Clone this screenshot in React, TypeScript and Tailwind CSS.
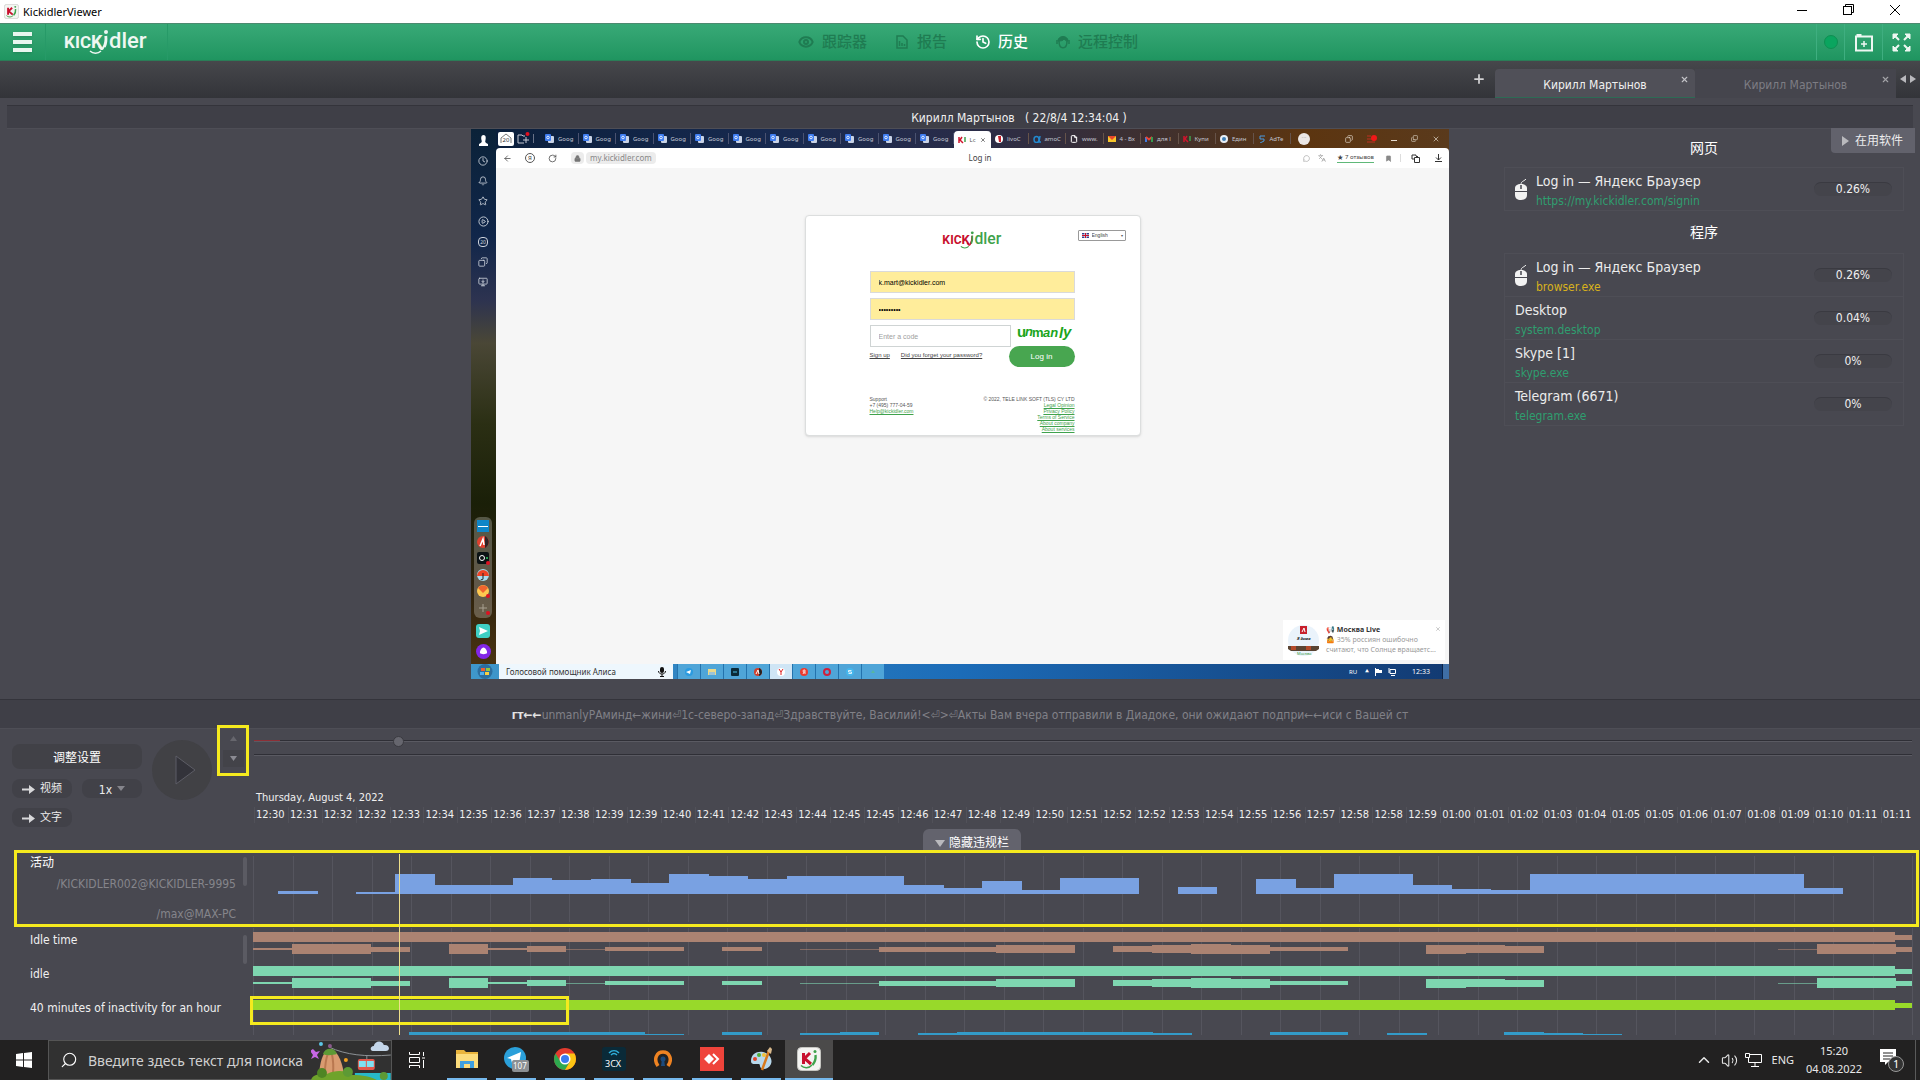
import type { ReactNode } from "react";
import {
  ArrowLeft,
  Bell,
  Bookmark,
  ChevronUp,
  Clock,
  Copy,
  Eye,
  File,
  History,
  Lock,
  MonitorDown,
  Plus,
  RotateCw,
  Search,
  Star,
  CirclePlay,
  Volume2,
  X,
  MessageCircle,
  Languages,
} from "lucide-react";

const uiFont = "font-['DejaVu_Sans_Condensed','Noto_Sans_CJK_SC',sans-serif]";
const winFont = "font-['Noto_Sans','Noto_Sans_CJK_SC',sans-serif]";

const times = [
  "12:30", "12:31", "12:32", "12:32", "12:33", "12:34", "12:35", "12:36", "12:37", "12:38",
  "12:39", "12:39", "12:40", "12:41", "12:42", "12:43", "12:44", "12:45", "12:45", "12:46",
  "12:47", "12:48", "12:49", "12:50", "12:51", "12:52", "12:52", "12:53", "12:54", "12:55",
  "12:56", "12:57", "12:58", "12:58", "12:59", "01:00", "01:01", "01:02", "01:03", "01:04",
  "01:05", "01:05", "01:06", "01:07", "01:08", "01:09", "01:10", "01:11", "01:11",
];

const activity = [
  3, 0, 2, 20, 9, 9, 16, 14, 15, 11, 20, 18, 15, 18, 18, 18, 9, 6, 13, 4, 16, 16, 0, 7, 0, 15, 6,
  20, 20, 9, 5, 4, 20, 20, 20, 20, 20, 20, 20, 6,
];

const idleLevels = [
  2, 10, 10, 5, 0, 10, 2, 6, 1, 4, 4, 0, 4, 0, 1, 1, 5, 5, 5, 8, 8, 0, 6, 8, 10, 9, 4, 4, 0, 0, 9,
  8, 7, 0, 0, 0, 0, 0, 0, 1, 10, 10,
];

const blueLevels = [
  0, 0, 0, 0, 3, 3, 3, 3, 3, 3, 1, 0, 3, 0, 2, 3, 0, 2, 3, 3, 3, 3, 3, 2, 0, 0, 3, 3, 0, 2, 0, 0, 3,
  2, 1,
];

const CHART_W = 1660;
const SLOT = 39.1;

function GridLines({ height }: { height: number }) {
  return (
    <>
      {Array.from({ length: 43 }, (_, i) => (
        <rect key={i} x={i * 39.5} y={0} width={1} height={height} fill="#55555e" />
      ))}
    </>
  );
}

function ActivityChart() {
  return (
    <svg className="block h-[66px] w-full" viewBox={`0 0 ${CHART_W} 66`} preserveAspectRatio="none" shapeRendering="crispEdges">
      <GridLines height={66} />
      {activity.map((h, i) => (
        <rect key={i} x={25 + i * 39.12} y={38 - h} width={h ? 39.6 : 0} height={h} fill="#79a1e2" />
      ))}
    </svg>
  );
}

function Lane({ color, levels }: { color: string; levels: number[] }) {
  return (
    <svg className="block h-[34px] w-full" viewBox={`0 0 ${CHART_W} 34`} preserveAspectRatio="none" shapeRendering="crispEdges">
      <GridLines height={34} />
      <rect x={0} y={4} width={1642} height={10} fill={color} />
      <rect x={1642} y={7} width={17} height={5} fill={color} />
      {levels.map((h, i) => (
        <rect key={i} x={i * SLOT} y={21 - Math.floor(h / 2)} width={h ? 39.6 : 0} height={h} fill={color} opacity={h === 1 ? 0.6 : 1} />
      ))}
      {levels.length > 0 && <rect x={1642} y={19} width={17} height={5} fill={color} />}
    </svg>
  );
}

function ClippedLane() {
  return (
    <svg className="block h-[5px] w-full" viewBox={`0 0 ${CHART_W} 5`} preserveAspectRatio="none" shapeRendering="crispEdges">
      <GridLines height={5} />
      {blueLevels.map((h, i) => (
        <rect key={i} x={i * SLOT} y={5 - h} width={h ? 39.6 : 0} height={h} fill="#339bc9" />
      ))}
    </svg>
  );
}

function Logo({ className, left, right }: { className: string; left: string; right: string }) {
  return (
    <svg className={className} viewBox="0 0 86 28" role="img" aria-label="Kickidler">
      <g fontFamily="Roboto, Noto Sans, sans-serif" fontWeight="700">
        <text x="0" y="20" fontSize="17" fill={left}>K</text>
        <text x="11" y="20" fontSize="17" fill={left}>I</text>
        <text x="16" y="20" fontSize="17" fill={left}>C</text>
        <text x="27" y="20" fontSize="18" fill={left}>K</text>
        <text x="45" y="20" fontSize="22" fontWeight="500" fill={right}>dler</text>
      </g>
      <path d="M35 18c1 3 3 4 4 2 2-3 3-7 2.500-12" stroke={left} strokeWidth="2" fill="none" />
      <path d="M42 8c.5 4 0 8-1.500 11" stroke={right} strokeWidth="2.400" fill="none" />
      <circle cx="42" cy="4" r="2" fill={right} />
      <path d="M26 23c3 3 8 3 11 0" stroke={right} strokeWidth="1.500" fill="none" />
    </svg>
  );
}

function KIcon({ className }: { className: string }) {
  return (
    <svg className={className} viewBox="0 0 24 24">
      <rect x="0.5" y="0.5" width="23" height="23" rx="4" fill="#f4f4f2" stroke="#c6c6c2" />
      <path d="M6.500 6v11M13 6l-5.500 5.500L14 17" stroke="#c8102e" strokeWidth="3" fill="none" />
      <path d="M18.500 8c.5 4-.5 7-3 10" stroke="#3fa24c" strokeWidth="2.400" fill="none" />
      <circle cx="18" cy="4.500" r="1.500" fill="#3fa24c" />
      <path d="M4 18.500c3 3 8 3 11-.5" stroke="#3fa24c" strokeWidth="1.500" fill="none" />
    </svg>
  );
}

function TitleBar() {
  return (
    <div className={`flex h-[23px] items-center bg-white pl-1 pr-[19px] text-black ${winFont}`}>
      <KIcon className="h-[15px] w-[15px]" />
      <span className="ml-1 text-[11px] leading-none">KickidlerViewer</span>
      <div className="ml-auto flex items-center gap-[34px] pb-[3px]">
        <button aria-label="Minimize" className="flex h-3 w-3 items-center">
          <span className="h-px w-[10px] bg-black" />
        </button>
        <button aria-label="Restore">
          <svg className="h-3 w-3" viewBox="0 0 12 12" fill="none" stroke="#000">
            <rect x="0.500" y="2.500" width="8" height="8" />
            <path d="M2.500 2.500v-2h8v8h-2" />
          </svg>
        </button>
        <button aria-label="Close">
          <svg className="h-3 w-3" viewBox="0 0 12 12" fill="none" stroke="#000">
            <path d="M1 1l10 10M11 1L1 11" />
          </svg>
        </button>
      </div>
    </div>
  );
}

function NavItem({ icon, label, active }: { icon: ReactNode; label: string; active?: boolean }) {
  return (
    <a href="#" className={active ? "flex items-center gap-[7px] text-white" : "flex items-center gap-[8px] text-[#1f7c52]"}>
      {icon}
      <span className="text-[15px] font-medium leading-none">{label}</span>
    </a>
  );
}

function Header() {
  return (
    <header className="grid h-[38px] grid-cols-[1fr_auto_1fr] items-center border-b border-t border-b-[#2a7d57] border-t-[#4c8a70] bg-gradient-to-b from-[#38a977] to-[#1f9560]">
      <div className="flex h-full items-center">
        <button aria-label="Menu" className="flex h-full w-[46px] flex-col items-center justify-center gap-[4px] border-r border-[#279a68]">
          <span className="h-[4px] w-[19px] bg-[#e8f6ef] shadow" />
          <span className="h-[4px] w-[19px] bg-[#e8f6ef] shadow" />
          <span className="h-[4px] w-[19px] bg-[#e8f6ef] shadow" />
        </button>
        <div className="flex h-full w-[122px] items-center justify-center border-r border-[#279a68]">
          <Logo className="h-[28px] w-[86px]" left="#eef7f2" right="#eef7f2" />
        </div>
      </div>
      <nav className="ml-[16px] flex items-center gap-[28px]">
        <NavItem icon={<Eye size={16} strokeWidth={3} />} label="跟踪器" />
        <NavItem
          icon={
            <svg className="h-[14px] w-[14px]" viewBox="0 0 14 14" fill="none" stroke="currentColor" strokeWidth="1.500">
              <path d="M2 1h6l4 4v8H2z" />
              <path d="M4.500 11V6M7 11V8M9.500 11V9" />
            </svg>
          }
          label="报告"
        />
        <NavItem icon={<History size={16} strokeWidth={2.5} />} label="历史" active />
        <NavItem
          icon={
            <svg className="h-[14px] w-[14px]" viewBox="0 0 14 14" fill="none" stroke="currentColor">
              <path d="M2 6C2 0 12 0 12 6c-2 0-3-1-4-2-1 2-4 2-6 2z" fill="currentColor" />
              <path d="M3 6c0 9 8 9 8 0" strokeWidth="1.500" />
              <path d="M1 5v4M13 5v4" strokeWidth="1.500" />
            </svg>
          }
          label="远程控制"
        />
      </nav>
      <div className="flex h-full items-stretch justify-end text-white">
        <div className="flex w-[28px] items-center justify-center border-l border-[#3fae80]">
          <span className="h-[14px] w-[14px] rounded-full border border-[#0e8f52] bg-[#0aa55f]" />
        </div>
        <button aria-label="Add view" className="flex w-[38px] items-center justify-center border-l border-[#3fae80]">
          <svg className="h-[19px] w-[18px]" viewBox="0 0 18 19" fill="none" stroke="#eef7f2" strokeWidth="2">
            <path d="M1.500 2h5M1 3.500h16v14H1z" />
            <path d="M9 8v6M6 11h6" strokeWidth="1.500" />
          </svg>
        </button>
        <button aria-label="Full screen" className="flex w-[38px] items-center justify-center border-l border-[#3fae80]">
          <svg className="h-[19px] w-[19px]" viewBox="0 0 19 19" fill="#eef7f2" stroke="#eef7f2" strokeWidth="2">
            <path d="M1 1h5L1 6zM18 1v5l-5-5zM1 18v-5l5 5zM18 18h-5l5-5z" strokeWidth="1" />
            <path d="M2 2l5 5M17 2l-5 5M2 17l5-5M17 17l-5-5" />
          </svg>
        </button>
      </div>
    </header>
  );
}

function TabStrip() {
  return (
    <div className="flex h-[37px] items-end justify-end bg-gradient-to-b from-[#46474b] to-[#333439] text-[12px]">
      <button aria-label="New tab" className="mb-[12px] mr-[9px] text-[#d2d2d4]">
        <Plus size={14} strokeWidth={3} />
      </button>
      <div className="relative flex h-[29px] w-[200px] items-center justify-center rounded-t border-b border-[#2d6b55] bg-[#505058] pt-[3px] text-[#f0f0f0]">
        Кирилл Мартынов
        <button aria-label="Close tab" className="absolute right-[6px] top-[6px] text-[#c4c4c8]">
          <X size={9} strokeWidth={3} />
        </button>
      </div>
      <div className="relative flex h-[29px] w-[201px] items-center justify-center bg-[#45454d] pt-[3px] text-[#7d7d84]">
        Кирилл Мартынов
        <button aria-label="Close tab" className="absolute right-[6px] top-[6px] text-[#a4a4a8]">
          <X size={9} strokeWidth={3} />
        </button>
      </div>
      <div className="flex w-[24px] justify-center pb-[15px]">
        <svg className="h-[8px] w-[16px]" viewBox="0 0 16 8" fill="#b9b9bd">
          <path d="M6 0v8L0 4zM10 0v8l6-4z" />
        </svg>
      </div>
    </div>
  );
}

function GoogleGlyph() {
  return (
    <svg className="h-[9px] w-[9px] shrink-0" viewBox="0 0 9 9">
      <rect x="3" y="2" width="6" height="7" rx="1" fill="#c9d3e6" />
      <rect x="0" y="0" width="6" height="7" rx="1" fill="#3f7df0" />
      <circle cx="3" cy="3.500" r="1.300" fill="none" stroke="#fff" strokeWidth="0.800" />
    </svg>
  );
}

const siteTabs: { label: string; icon: ReactNode }[] = [
  { label: "livoC", icon: <svg className="h-2 w-2 shrink-0" viewBox="0 0 8 8"><circle cx="4" cy="4" r="4" fill="#fff" /><path d="M3 1h3v6H4z" fill="#c8202c" /></svg> },
  { label: "amoC", icon: <svg className="h-2 w-2 shrink-0" viewBox="0 0 8 8" fill="none" stroke="#2389cf" strokeWidth="1.500"><ellipse cx="3.500" cy="4.500" rx="2.500" ry="3" /><path d="M7 1L6 7h2" /></svg> },
  { label: "www.", icon: <File size={8} color="#fff" strokeWidth={3} className="shrink-0" /> },
  { label: "4 - Вх", icon: <svg className="h-2 w-2 shrink-0" viewBox="0 0 8 8"><path d="M0 1h8v6H0z" fill="#f7c52b" /><path d="M0 1h8L4 5z" fill="#e8472b" /></svg> },
  { label: "для l", icon: <svg className="h-2 w-2 shrink-0" viewBox="0 0 8 8" fill="none" strokeWidth="1.800"><path d="M1 7V2" stroke="#4285f4" /><path d="M1 2l3 2.500L7 2" stroke="#ea4335" /><path d="M7 7V2" stroke="#34a853" /></svg> },
  { label: "Купи", icon: <svg className="h-2 w-2 shrink-0" viewBox="0 0 8 8" fill="none" strokeWidth="1.500"><path d="M1 1v6M4 1L2 4l3 3" stroke="#d0142c" /><path d="M7 1v5" stroke="#3fa24c" /></svg> },
  { label: "Един", icon: <svg className="h-2 w-2 shrink-0" viewBox="0 0 8 8"><circle cx="4" cy="4" r="4" fill="#e8eef4" /><circle cx="4" cy="4" r="2" fill="#3d7eb5" /></svg> },
  { label: "AdTe", icon: <svg className="h-2 w-2 shrink-0" viewBox="0 0 8 8" fill="none" stroke="#4a9ae0"><path d="M7 1H2v3h4v2L2 8" /></svg> },
];

function RemoteTabs() {
  return (
    <div className="flex h-[19px] items-stretch text-[6px] text-[#c4c8d4]">
      <div className="flex w-[45px] shrink-0 items-center gap-[3px] pl-[2px]">
        <svg className="h-[14px] w-4" viewBox="0 0 16 14">
          <rect width="16" height="14" rx="2" fill="#fff" />
          <path d="M3 11V6l5-4 5 4v5" fill="none" stroke="#555" strokeWidth="0.800" />
          <text x="4.500" y="9.500" fontSize="6" fill="#333">20</text>
        </svg>
        <svg className="h-[13px] w-[13px]" viewBox="0 0 13 13" fill="none" stroke="#c4c8d4">
          <path d="M7 11H1V3h4l1 1h2M9 5v6M6 8h6" />
          <circle cx="10.500" cy="2" r="2" fill="#e01020" stroke="none" />
        </svg>
        <span className="h-[9px] w-px bg-[#6a7288]" />
      </div>
      {Array.from({ length: 11 }, (_, i) => (
        <div key={i} className="my-[4px] flex min-w-0 flex-1 items-center gap-[4px] border-r border-[#4a5270] pl-[4px]">
          <GoogleGlyph />
          <span className="leading-none">Goog</span>
        </div>
      ))}
      <div className="mt-[2px] flex min-w-0 flex-1 items-center gap-1 rounded-t border-r border-white bg-white pl-[4px] text-[#555]">
        <svg className="h-2 w-2 shrink-0" viewBox="0 0 8 8" fill="none" strokeWidth="1.500"><path d="M1 1v6M4 1L2 4l3 3" stroke="#d0142c" /><path d="M7 1v5" stroke="#3fa24c" /></svg>
        <span className="leading-none">Lc</span>
        <X size={6} strokeWidth={3} className="shrink-0" />
      </div>
      {siteTabs.map((t) => (
        <div key={t.label} className="my-[4px] flex min-w-0 flex-1 items-center gap-[4px] whitespace-nowrap border-r border-[#66534a] pl-[4px]">
          {t.icon}
          <span className="leading-none">{t.label}</span>
        </div>
      ))}
      <div className="flex w-[158px] shrink-0 items-center pl-[7px] pr-[9px] text-[#e6dcd0]">
        <span className="h-3 w-3 rounded-full bg-[#ece8e6] text-center text-[6px] leading-[9px] text-[#888]">···</span>
        <div className="ml-auto flex items-center gap-[14px]">
          <Copy size={8} className="-scale-x-100" />
          <svg className="h-[8px] w-[10px]" viewBox="0 0 10 8"><path d="M0 1h4M0 4h5M0 7h8" stroke="#c03020" /><circle cx="7" cy="3" r="3" fill="#f01818" /></svg>
          <span className="mt-1 h-px w-[6px] bg-[#e6dcd0]" />
          <Copy size={7} className="-scale-y-100" />
          <X size={8} />
        </div>
      </div>
    </div>
  );
}

function RemoteToolbar() {
  return (
    <div className="flex h-5 items-center rounded-t bg-white px-[7px] text-[#444]">
      <div className="flex flex-1 items-center">
        <ArrowLeft size={9} />
        <span className="ml-[13px] flex h-[10px] w-[10px] items-center justify-center rounded-full border border-[#555] text-[6px] leading-none">Я</span>
        <RotateCw size={9} className="ml-[13px]" />
        <span className="ml-[14px] flex h-3 w-[13px] items-center justify-center rounded-sm bg-[#ececec]">
          <Lock size={7} fill="#777" color="#777" />
        </span>
        <span className="ml-[2px] rounded-sm bg-[#ececec] px-1 text-[8px] leading-[12px] text-[#888]">my.kickidler.com</span>
      </div>
      <span className="ml-[15px] text-[8px] leading-none">Log in</span>
      <div className="flex flex-1 items-center justify-end">
        <MessageCircle size={7} color="#999" />
        <Languages size={8} color="#999" className="ml-2" />
        <span className="ml-[11px] border-b border-[#5fb878] text-[6px] leading-[9px]">★ 7 отзывов</span>
        <Bookmark size={7} fill="#888" color="#888" className="ml-[11px]" />
        <span className="ml-2 h-2 w-px bg-[#ddd]" />
        <svg className="ml-[10px] h-[9px] w-[9px]" viewBox="0 0 9 9" fill="none" stroke="#333"><path d="M3 5H1V1h4v1M3.500 3.500h5v5h-5zM5 2.500h2" /></svg>
        <svg className="ml-[15px] h-[8px] w-[7px]" viewBox="0 0 7 8" fill="none" stroke="#333"><path d="M3.500 0v6M1 3.500L3.500 6 6 3.500M0 7.500h7" /></svg>
      </div>
    </div>
  );
}

function LoginCard() {
  return (
    <form className="mx-auto mt-[47px] h-[221px] w-[336px] rounded-sm border border-[#dcdede] bg-white font-['Liberation_Sans',sans-serif] shadow-sm">
      <div className="grid grid-cols-[1fr_auto_1fr] items-start px-[14px] pt-[14px]">
        <span />
        <Logo className="h-[20px] w-[62px]" left="#c8102e" right="#3fa24c" />
        <div className="flex justify-end">
          <div className="flex h-[11px] w-[48px] items-center rounded-[1px] border border-[#999] pl-[3px]">
            <svg className="h-[5px] w-[7px] shrink-0" viewBox="0 0 7 5"><rect width="7" height="5" fill="#35418c" /><path d="M0 2.500h7M3.500 0v5" stroke="#fff" strokeWidth="2" /><path d="M0 2.500h7M3.500 0v5" stroke="#c8102e" /></svg>
            <select aria-label="Language" className="w-full appearance-none bg-transparent pl-[3px] text-[5px] leading-none text-[#444]">
              <option>English</option>
            </select>
            <span className="mr-[2px] text-[4px] leading-none text-[#555]">▾</span>
          </div>
        </div>
      </div>
      <div className="ml-[64px] mr-[65px] mt-[21px] flex flex-col gap-[5px]">
        <input aria-label="Email" defaultValue="k.mart@kickidler.com" className="h-[22px] border border-[#dadada] bg-[#ffed9b] px-2 text-[7px] text-black" />
        <input aria-label="Password" type="password" defaultValue="kickidler" className="h-[22px] border border-[#dadada] bg-[#ffed9b] px-2 text-[7px] text-black" />
        <div className="flex justify-between">
          <input aria-label="Code" placeholder="Enter a code" className="h-[22px] w-[141px] border border-[#cfd4d4] bg-white px-2 text-[7px] placeholder:text-[#a0a0a0]" />
          <svg className="mt-[1px] h-[16px] w-[58px]" viewBox="0 0 58 16" role="img" aria-label="unmanly">
            <g fontWeight="700" fontFamily="Liberation Sans, sans-serif" fill="#1ba51b">
              <text x="0" y="11" fontSize="15">u</text>
              <text x="8" y="10" fontSize="13" fontStyle="italic">n</text>
              <text x="15" y="11" fontSize="13">m</text>
              <text x="26" y="11" fontSize="13" fontStyle="italic">an</text>
              <text x="42" y="12" fontSize="15" fontStyle="italic">l</text>
              <text x="46" y="11" fontSize="15" fontStyle="italic">y</text>
            </g>
          </svg>
        </div>
      </div>
      <div className="-mt-px ml-[64px] mr-[65px] flex items-start text-[6px] text-[#444]">
        <a href="#" className="mt-[5px] underline">Sign up</a>
        <a href="#" className="ml-[11px] mt-[5px] underline">Did you forget your password?</a>
        <button type="button" className="ml-auto h-[21px] w-[66px] rounded-full bg-[#48a650] text-[8px] text-white">Log in</button>
      </div>
      <div className="ml-[64px] mr-[65px] mt-[29px] flex justify-between text-[5px] leading-[6px] text-[#555]">
        <div>
          <p>Support</p>
          <p>+7 (495) 777-04-59</p>
          <a href="#" className="text-[#3fa24c] underline">Help@kickidler.com</a>
        </div>
        <div className="flex flex-col items-end text-[#3fa24c]">
          <p className="text-[#555]">© 2022, TELE LINK SOFT (TLS) CY LTD</p>
          <a href="#" className="underline">Legal Opinion</a>
          <a href="#" className="underline">Privacy Policy</a>
          <a href="#" className="underline">Terms of Service</a>
          <a href="#" className="underline">About company</a>
          <a href="#" className="underline">About services</a>
        </div>
      </div>
    </form>
  );
}

function RemoteSidebar() {
  return (
    <div className="flex w-[25px] shrink-0 flex-col items-center pb-[5px] pr-px pt-[6px] text-[#cdd3dc]">
      <div className="flex flex-col items-center gap-[10px]">
        <svg className="h-[11px] w-[9px]" viewBox="0 0 9 11" fill="#fff"><path d="M4.500 0C7 0 7 3 6.500 5 6 7 6 7.500 9 9v2H0V9c3-1.500 3-2 2.500-4C2 3 2 0 4.500 0z" /></svg>
        <Clock size={10} />
        <Bell size={10} />
        <Star size={10} />
        <CirclePlay size={11} />
        <span className="flex h-[10px] w-[10px] items-center justify-center rounded-sm border border-[#cdd3dc] text-[5px] leading-none">20</span>
        <Copy size={10} className="-scale-x-100" />
        <MonitorDown size={10} />
      </div>
      <div className="mt-auto flex w-[18px] flex-col items-center gap-[4px] rounded-md bg-white/25 py-[3px]">
        <svg className="h-3 w-3" viewBox="0 0 12 12"><rect width="12" height="12" fill="#0f86c8" /><path d="M1 6.500h10" stroke="#fff" /></svg>
        <svg className="h-3 w-3" viewBox="0 0 12 12"><circle cx="6" cy="6" r="6" fill="#e0402e" /><path d="M8 0c5 3 5 9 0 12z" fill="#2b2326" /><path d="M3 10l3-7 1 6" stroke="#fff" strokeWidth="1.500" fill="none" /></svg>
        <svg className="h-[13px] w-[13px]" viewBox="0 0 13 13"><rect width="12" height="12" rx="2" fill="#0b1214" /><circle cx="5" cy="6" r="2.500" fill="none" stroke="#fff" /><circle cx="10" cy="6" r="1" fill="#3c6" /><circle cx="11" cy="11" r="2" fill="#e01020" /></svg>
        <svg className="h-3 w-3" viewBox="0 0 12 12"><circle cx="6" cy="6" r="6" fill="#a8dcf0" /><path d="M0 7a6 6 0 0 1 12 0z" fill="#ee4326" /><path d="M6 4v6c0 1-2 1-2 0" stroke="#222" fill="none" /></svg>
        <svg className="h-[13px] w-[13px]" viewBox="0 0 13 13"><circle cx="6" cy="6" r="6" fill="#ffc850" /><path d="M1 3a6 6 0 0 1 10 0L6 8z" fill="#f0652e" /><circle cx="11" cy="11" r="2" fill="#e01020" /></svg>
        <svg className="h-[13px] w-[13px]" viewBox="0 0 13 13"><path d="M6 2v8M2 6h8" stroke="#a8a090" /><circle cx="11" cy="11" r="2" fill="#e01020" /></svg>
      </div>
      <svg className="mt-[6px] h-[14px] w-[14px]" viewBox="0 0 14 14"><rect width="14" height="14" rx="3" fill="#3fd0c4" /><path d="M3 3l9 4-9 4 1-4z" fill="#fff" /></svg>
      <svg className="mt-[6px] h-[15px] w-[15px]" viewBox="0 0 15 15"><circle cx="7.500" cy="7.500" r="7.500" fill="#8326e8" /><path d="M7.500 3.500c2 0 4 4 3.500 5.500s-6.500 1.500-7 0 1.500-5.500 3.500-5.500z" fill="#fff" /></svg>
    </div>
  );
}

function Toast() {
  return (
    <div className="ml-auto mr-1 mt-auto mb-[4px] flex h-[40px] w-[162px] items-center bg-white pl-[5px] pr-1">
      <svg className="h-[31px] w-[31px] shrink-0" viewBox="0 0 31 31">
        <circle cx="15.500" cy="15.500" r="15.500" fill="#eaf3fb" />
        <rect x="12" y="1" width="7" height="8" fill="#c8202c" />
        <path d="M14 7l2-4 1 4" stroke="#fff" fill="none" />
        <text x="9" y="15" fontSize="4" fontWeight="700" fontStyle="italic" fill="#222">Я дома</text>
        <path d="M0 21h31v3l-3 2H3l-3-2z" fill="#5a4433" />
        <path d="M3 21h5v4H3zM18 21h5v4h-5z" fill="#b24a2b" />
        <text x="9" y="30" fontSize="4" fill="#3fa24c">Москва</text>
      </svg>
      <div className="ml-[7px] flex-1 text-[7px] leading-[10px] text-[#9a9a9a]">
        <p className="text-[7px] font-bold text-[#333]">📢 Москва Live</p>
        <p className="whitespace-nowrap">🤷 35% россиян ошибочно</p>
        <p className="whitespace-nowrap">считают, что Солнце вращаетс...</p>
      </div>
      <X size={6} color="#999" className="-ml-3 mb-[22px] shrink-0" />
    </div>
  );
}

const remoteApps: ReactNode[] = [
  <svg key="tg" className="h-2 w-2" viewBox="0 0 8 8"><circle cx="4" cy="4" r="4" fill="#2b9be0" /><path d="M1 4l5-2-1 4z" fill="#fff" /></svg>,
  <svg key="ex" className="h-2 w-2" viewBox="0 0 8 8"><path d="M0 1h8v6H0z" fill="#ead98a" /><path d="M1 4h6v3H1z" fill="#9cc4d8" /></svg>,
  <svg key="cx" className="h-2 w-2" viewBox="0 0 8 8"><rect width="8" height="8" rx="1" fill="#0b2a38" /><path d="M2 4h4" stroke="#4cc0e8" /></svg>,
  <svg key="ab" className="h-2 w-2" viewBox="0 0 8 8"><circle cx="4" cy="4" r="4" fill="#d0402e" /><path d="M5 0c4 2 4 6 0 8z" fill="#222" /><path d="M2 6l2-4 1 4" stroke="#fff" fill="none" /></svg>,
  <svg key="ya" className="h-2 w-2" viewBox="0 0 8 8"><circle cx="4" cy="4" r="4" fill="#fff" /><path d="M2 1l2 3 2-3M4 4v3" stroke="#e02020" fill="none" /></svg>,
  <svg key="y2" className="h-2 w-2" viewBox="0 0 8 8"><circle cx="4" cy="4" r="4" fill="#ee3a2e" /><path d="M5 6V2H4a1 1 0 0 0 0 2h1M4 4L3 6" stroke="#fff" strokeWidth="0.800" fill="none" /></svg>,
  <svg key="op" className="h-2 w-2" viewBox="0 0 8 8"><circle cx="4" cy="4" r="3" fill="none" stroke="#d0203c" strokeWidth="2" /></svg>,
  <svg key="sk" className="h-2 w-2" viewBox="0 0 8 8"><circle cx="4" cy="4" r="4" fill="#45b6ec" /><path d="M5.500 2.500h-3v1.500h3v1.500h-3" stroke="#fff" fill="none" strokeWidth="0.800" /></svg>,
  <svg key="gr" className="h-2 w-2" viewBox="0 0 8 8"><path d="M2 5l2-3 2 3z" fill="#57b7a0" /></svg>,
];

function RemoteTaskbar() {
  return (
    <div className="flex h-[15px] items-center bg-gradient-to-r from-[#3f97ca] via-[#1c6cb8] to-[#123a72]">
      <svg className="ml-[5px] h-[15px] w-[18px]" viewBox="0 0 18 15">
        <circle cx="9" cy="7.500" r="7.500" fill="#2d6e9e" />
        <path d="M5 4h4v3H5z" fill="#f06030" />
        <path d="M10 4h4v3h-4z" fill="#90c840" />
        <path d="M4 8h4v3H4z" fill="#50b0f0" />
        <path d="M9 8h4v3H9z" fill="#fcd040" />
      </svg>
      <div className="ml-[5px] flex h-full w-[174px] items-center justify-between bg-[#eef7fd] px-[7px] text-[8px] text-[#333]">
        <span className="leading-none">Голосовой помощник Алиса</span>
        <svg className="h-[10px] w-[8px]" viewBox="0 0 8 10"><rect x="2" y="0" width="4" height="6" rx="2" fill="#111" /><path d="M0.500 4c0 4 7 4 7 0M4 7v3M2 9.500h4" stroke="#111" fill="none" /></svg>
      </div>
      <div className="ml-[4px] flex h-full">
        {remoteApps.map((icon, i) => (
          <span key={i} className={i === 4 ? "flex w-[23px] items-center justify-center border-l border-[#2473ad] bg-[#cfe5f5]" : "flex w-[23px] items-center justify-center border-l border-[#2473ad] bg-[#4fa5d8]"}>
            {icon}
          </span>
        ))}
      </div>
      <div className="ml-auto mr-[6px] flex items-center text-[7px] leading-none text-white">
        <span className="text-[6px]">RU</span>
        <span className="ml-2 text-[4px]">▲</span>
        <svg className="ml-[6px] h-[8px] w-[8px]" viewBox="0 0 8 8" fill="#fff"><path d="M0 0h1v8H0zM1 1h3v1h3v3H1z" /></svg>
        <svg className="ml-[5px] h-[8px] w-[8px]" viewBox="0 0 8 8" fill="none" stroke="#fff"><path d="M2 1.500h5.500v4H2zM1 0v5M3 7.500h4" /></svg>
        <span className="ml-4 mr-[6px]">12:33</span>
      </div>
      <span className="h-full w-[7px] border-l border-[#0a2348] bg-[#3f6ea5]" />
    </div>
  );
}

function RemoteScreen() {
  return (
    <div className={`flex min-h-[550px] flex-col overflow-hidden ${winFont}`}>
      <div className="flex flex-1 bg-[linear-gradient(180deg,#0b2238_0%,#10264a_20%,#2d3350_32%,#4a4736_40%,#2b2f14_55%,#1a1f08_70%,#2c210c_85%,#4a3312_100%)]">
        <RemoteSidebar />
        <div className="flex min-w-0 flex-1 flex-col bg-[linear-gradient(90deg,#0b1f3c_0%,#182a50_30%,#2a2c48_50%,#40302e_70%,#5c3510_85%,#5a3a1c_100%)]">
          <RemoteTabs />
          <RemoteToolbar />
          <div className="flex flex-1 flex-col bg-[#f6f6f6]">
            <LoginCard />
            <Toast />
          </div>
        </div>
      </div>
      <RemoteTaskbar />
    </div>
  );
}

const webRows = [{ title: "Log in — Яндекс Браузер", sub: "https://my.kickidler.com/signin", color: "text-[#2f9e6f]", value: "0.26%", mouse: true }];
const programRows = [
  { title: "Log in — Яндекс Браузер", sub: "browser.exe", color: "text-[#d8b21c]", value: "0.26%", mouse: true },
  { title: "Desktop", sub: "system.desktop", color: "text-[#2f9e6f]", value: "0.04%", mouse: false },
  { title: "Skype [1]", sub: "skype.exe", color: "text-[#2f9e6f]", value: "0%", mouse: false },
  { title: "Telegram (6671)", sub: "telegram.exe", color: "text-[#2f9e6f]", value: "0%", mouse: false },
];

function UsageList({ rows }: { rows: typeof webRows }) {
  return (
    <ul className="border-l border-r border-t border-[#4e4e56]">
      {rows.map((r) => (
        <li key={r.title} className="flex h-[43px] items-center border-b border-[#4e4e56] pl-[10px] pr-[11px]">
          {r.mouse && (
            <svg className="mr-[9px] h-[21px] w-3 shrink-0" viewBox="0 0 12 21">
              <path d="M6 6C6 2 8 3 11 0" stroke="#f2f2f2" fill="none" />
              <path d="M0 12V9c0-2 2-4 6-4s6 2 6 4v3z" fill="#f2f2f2" />
              <path d="M0 13h12v3c0 3-2 5-6 5s-6-2-6-5z" fill="#f2f2f2" />
              <path d="M6 6v4" stroke="#45454d" strokeWidth="1.500" />
            </svg>
          )}
          <div className="min-w-0 flex-1 pt-[3px]">
            <p className="text-[14px] leading-[20px] text-[#ececec]">{r.title}</p>
            <p className={`text-[12px] leading-[20px] ${r.color}`}>{r.sub}</p>
          </div>
          <span className="h-[14px] w-[78px] rounded-full border-t border-[#3a3a41] bg-[#44444b] text-center text-[12px] leading-[13px] text-[#f0f0f0]">{r.value}</span>
        </li>
      ))}
    </ul>
  );
}

function SidePanel() {
  return (
    <aside className="relative ml-[55px] mr-4">
      <h2 className="pt-[7px] text-center text-[14px] leading-[24px] text-white">网页</h2>
      <div className="mt-[7px]">
        <UsageList rows={webRows} />
      </div>
      <h2 className="pt-[9px] text-center text-[14px] leading-[24px] text-white">程序</h2>
      <div className="mt-[9px]">
        <UsageList rows={programRows} />
      </div>
      <button className="absolute -right-[11px] -top-px flex h-[25px] w-[84px] items-center gap-[6px] rounded-bl bg-[#62626c] pl-[11px] pt-px text-[12px] text-[#ececec]">
        <svg className="h-[10px] w-[7px]" viewBox="0 0 7 10" fill="#b9b9bd"><path d="M0 0l7 5-7 5z" /></svg>
        在用软件
      </button>
    </aside>
  );
}

function ArrowButton({ label }: { label: string }) {
  return (
    <button className="flex h-[19px] w-[60px] items-center justify-center gap-[5px] rounded-lg bg-[#414148] pt-px text-[11px] text-[#ececec]">
      <svg className="h-[9px] w-[13px]" viewBox="0 0 13 9" fill="#d8d8da"><path d="M0 3.500h7V0l6 4.500L7 9V5.500H0z" /></svg>
      {label}
    </button>
  );
}

function PlayerControls() {
  return (
    <div className="flex h-[100px]">
      <div className="flex w-[254px] shrink-0 pl-3">
        <div className="w-[130px] pt-[15px]">
          <button className="block h-[25px] w-full rounded-lg bg-[#414147] pt-[2px] text-[12px] text-white">调整设置</button>
          <div className="mt-[10px] flex justify-between">
            <ArrowButton label="视频" />
            <button className="flex h-[19px] w-[60px] items-center justify-center gap-[5px] rounded-lg bg-[#414148] pt-[2px] text-[12px] text-[#ececec]">
              1x
              <svg className="mb-[3px] h-[5px] w-2" viewBox="0 0 8 5" fill="#85858c"><path d="M0 0h8L4 5z" /></svg>
            </button>
          </div>
          <div className="mt-[10px]">
            <ArrowButton label="文字" />
          </div>
        </div>
        <button aria-label="Play" className="ml-[10px] mt-[11px] flex h-[60px] w-[60px] items-center justify-center rounded-full bg-[#414145]">
          <svg className="ml-[7px] h-[30px] w-[21px]" viewBox="0 0 21 30"><path d="M1 1l19 14L1 29z" fill="#33333a" stroke="#5d5d66" /></svg>
        </button>
        <div className="-mt-[4px] ml-[5px] flex h-[51px] w-8 flex-col items-center gap-[3px] border-[3px] border-[#f5ea1e] pt-[2px]">
          <button aria-label="Zoom in" className="flex h-[17px] w-[21px] items-center justify-center">
            <svg className="h-[5px] w-[7px]" viewBox="0 0 7 5" fill="#66666d"><path d="M0 5h7L3.500 0z" /></svg>
          </button>
          <button aria-label="Zoom out" className="flex h-[17px] w-[21px] items-center justify-center bg-[#434349]">
            <svg className="h-[5px] w-[7px]" viewBox="0 0 7 5" fill="#8b8b92"><path d="M0 0h7L3.500 5z" /></svg>
          </button>
        </div>
      </div>
      <div className="min-w-0 flex-1 pr-[5px]">
        <div className="relative mr-[3px] mt-[11px] h-[2px] border-b border-[#5a5a62] bg-[#2f2f36]">
          <span className="absolute left-0 top-0 h-px w-[26px] bg-[#8c2f36]" />
          <span className="absolute left-[139px] -top-[4px] h-[11px] w-[11px] rounded-full border border-[#3a3a40] bg-[#66666e]" />
        </div>
        <div className="mr-[3px] mt-[12px] h-[2px] border-b border-[#5a5a62] bg-[#2f2f36]" />
        <p className="ml-[2px] mt-[34px] text-[11px] leading-[16px] text-[#f0f0f0]">Thursday, August 4, 2022</p>
        <ol className="mt-px flex text-[11px] leading-4 text-[#f0f0f0]">
          {times.map((t, i) => (
            <li key={i} className="min-w-0 flex-1 border-l border-[#515159] pl-px">{t}</li>
          ))}
        </ol>
      </div>
    </div>
  );
}

function Timeline() {
  return (
    <section className="relative">
      <div className="flex justify-center pl-6">
        <button className="flex h-6 w-[98px] items-center justify-center gap-1 rounded-t-md bg-[#63636d] pt-[4px] text-[12px] text-white">
          <svg className="h-[7px] w-[10px]" viewBox="0 0 10 7" fill="#b9b9bd"><path d="M0 0h10L5 7z" /></svg>
          隐藏违规栏
        </button>
      </div>
      <div className="relative flex h-[74px] pt-[3px]">
        <div className="flex w-[253px] shrink-0 pl-[30px] pr-[6px]">
          <div className="flex-1 pr-[7px] text-[12px]">
            <p className="-mt-[2px] leading-[18px] text-white">活动</p>
            <p className="text-right leading-[24px] text-[#85858b]">/KICKIDLER002@KICKIDLER-9995</p>
            <p className="mt-[6px] text-right leading-[24px] text-[#85858b]">/max@MAX-PC</p>
          </div>
          <span className="mt-px h-[29px] w-[4px] rounded bg-[#5b5b63]" />
        </div>
        <div className="min-w-0 flex-1 pr-[7px]">
          <ActivityChart />
        </div>
        <span className="pointer-events-none absolute -top-[3px] bottom-0 left-[14px] right-px border-[3px] border-[#f5ea1e]" />
      </div>
      <div className="relative flex pb-[5px] pt-px">
        <div className="flex w-[253px] shrink-0 pl-[30px] pr-[6px]">
          <div className="flex-1 text-[12px] text-[#f0f0f0]">
            <p className="h-[34px] leading-[25px]">Idle time</p>
            <p className="h-[34px] leading-[25px]">idle</p>
            <p className="h-[34px] leading-[25px]">40 minutes of inactivity for an hour</p>
          </div>
          <span className="mt-[7px] h-[29px] w-[4px] rounded bg-[#5b5b63]" />
        </div>
        <div className="min-w-0 flex-1 pr-[7px]">
          <Lane color="#ab8372" levels={idleLevels} />
          <Lane color="#7ed6b0" levels={idleLevels} />
          <Lane color="#98d92a" levels={[]} />
          <ClippedLane />
        </div>
        <span className="pointer-events-none absolute left-[250px] top-[69px] h-[29px] w-[319px] border-[3px] border-[#f5ea1e]" />
      </div>
      <span className="pointer-events-none absolute bottom-[5px] left-[399px] top-[25px] w-px bg-[#efe08a]" />
    </section>
  );
}

function SearchArt() {
  return (
    <svg className="h-[39px] w-[80px]" viewBox="0 0 80 39">
      <path d="M18 6C35 14 55 16 80 14" stroke="#8d9296" fill="none" />
      <path d="M44 32h36v7H44z" fill="#27b9c9" />
      <path d="M8 34c1-12 3-22 10-26 8-1 14 14 15 26z" fill="#d99b70" />
      <path d="M14 32c0-8 1-14 3-20M22 32c1-8 0-14-1-19" stroke="#b97850" strokeWidth="2" fill="none" />
      <path d="M12 13c2-7 12-7 14 0-4 1-10 2-14 0z" fill="#5d9a35" />
      <path d="M0 39c2-7 12-6 16-6 10-5 20-3 26 1 8 0 20 2 24 5z" fill="#6fa32b" />
      <circle cx="11" cy="32" r="5" fill="#4f8524" />
      <circle cx="37" cy="31" r="5" fill="#5d9a35" />
      <circle cx="73" cy="35" r="4" fill="#5d9a35" />
      <path d="M2 8l3 3 4-1-3 4 2 4-4-2-4 2 2-4-3-4z" fill="#c867e6" />
      <circle cx="10" cy="3" r="2" fill="#5cc7e6" />
      <circle cx="19" cy="5" r="2" fill="#8b5a8c" />
      <circle cx="35" cy="19" r="2" fill="#f0a020" />
      <path d="M56 14v4" stroke="#8d9296" />
      <rect x="47" y="18" width="17" height="11" rx="2" fill="#e2574c" />
      <rect x="48" y="20" width="7" height="6" fill="#7fe0f2" />
      <rect x="56" y="20" width="7" height="6" fill="#7fe0f2" />
      <path d="M62 10c-3 0-3-5 1-5 1-6 9-6 10-1 6-1 7 6 2 6z" fill="#c4d6e8" />
    </svg>
  );
}

const dockApps: { name: string; icon: ReactNode }[] = [
  { name: "Explorer", icon: <svg className="h-[20px] w-[22px]" viewBox="0 0 22 20"><path d="M0 1h8l2 2h12v16H0z" fill="#e9b43c" /><path d="M0 5h22v14H0z" fill="#fcdc7c" /><path d="M4 19v-7h14v7h-4v-4H8v4z" fill="#3f9fe0" /></svg> },
  { name: "Telegram", icon: <svg className="h-[26px] w-[26px]" viewBox="0 0 26 26"><circle cx="12" cy="12" r="11" fill="#2ba0da" /><path d="M4 12l14-6-2 12-5-4-2 3-1-4z" fill="#fff" /><rect x="9" y="14" width="17" height="12" rx="2" fill="#8b8f93" /><text x="10" y="23" fontSize="8" fill="#fff" fontFamily="Noto Sans">107</text></svg> },
  { name: "Chrome", icon: <svg className="h-[22px] w-[22px]" viewBox="0 0 22 22"><circle cx="11" cy="11" r="11" fill="#e33b2e" /><path d="M1.500 5.500A11 11 0 0 0 11 22l5-8.500H6.500z" fill="#2da94f" /><path d="M11 22A11 11 0 0 0 20.500 5.500H11l5 8z" fill="#fdc413" /><circle cx="11" cy="11" r="5.500" fill="#fff" /><circle cx="11" cy="11" r="4" fill="#3a7bf0" /></svg> },
  { name: "3CX", icon: <svg className="h-[24px] w-[24px]" viewBox="0 0 24 24"><rect width="24" height="24" rx="3" fill="#0a2a38" /><path d="M7 6c3-3 7-3 10 0M9 8c2-2 4-2 6 0" stroke="#2fb0dc" fill="none" strokeWidth="1.500" /><text x="3" y="20" fontSize="9" fill="#fff" fontFamily="Noto Sans">3CX</text></svg> },
  { name: "OpenVPN", icon: <svg className="h-[18px] w-[18px]" viewBox="0 0 18 18"><path d="M4 16C-1 9 3 2 9 2s10 7 5 14" stroke="#ef8322" strokeWidth="3.500" fill="none" /><circle cx="9" cy="9" r="2.500" fill="#1c4a7c" /><path d="M8 9h2l1 7H7z" fill="#1c4a7c" /></svg> },
  { name: "AnyDesk", icon: <svg className="h-[24px] w-[24px]" viewBox="0 0 24 24"><rect width="24" height="24" fill="#ef443b" /><path d="M4 12l5-5 5 5-5 5z" fill="#fff" /><path d="M13 7l5 5-5 5" stroke="#fff" strokeWidth="2" fill="none" /></svg> },
  { name: "Paint", icon: <svg className="h-[24px] w-[24px]" viewBox="0 0 24 24"><path d="M2 14C2 7 8 4 14 5s10 7 8 12-8 6-10 4 0-4-3-4-7 1-7-3z" fill="#b8d8ec" /><circle cx="6" cy="12" r="2" fill="#e0452b" /><circle cx="10" cy="8" r="2" fill="#4fae3a" /><circle cx="15" cy="8" r="2" fill="#f2c037" /><path d="M20 4l-7 19" stroke="#d87a1c" strokeWidth="2.500" /><path d="M18 4l3-4 2 2-1 5z" fill="#d9b98c" /></svg> },
];

function Taskbar() {
  return (
    <footer className={`flex h-10 items-center bg-[#222121] text-[#e8e8e8] ${winFont}`}>
      <button aria-label="Start" className="flex w-12 justify-center">
        <svg className="h-4 w-4" viewBox="0 0 16 16" fill="#fff"><path d="M0 2l7-1v6.500H0zM8 1l8-1v7.500H8zM0 8.500h7V15l-7-1zM8 8.500h8V16l-8-1z" /></svg>
      </button>
      <label className="flex h-10 w-[344px] items-center border border-[#555] bg-[#313131] pl-[11px]">
        <Search size={18} strokeWidth={1.5} className="-scale-x-100 text-white" />
        <input aria-label="Search" placeholder="Введите здесь текст для поиска" className="ml-[10px] w-[224px] bg-transparent text-[14px] placeholder:text-[#d0d0d0]" />
        <SearchArt />
      </label>
      <button aria-label="Task view" className="flex w-[50px] justify-center">
        <svg className="h-4 w-4" viewBox="0 0 16 16" fill="none" stroke="#fff"><path d="M0 .5h1M10 .5h1M.5 0v2.500h10V0M.5 5.500h10v5H.5zM.5 16v-2.500h10V16M14.500 0v4M14.500 8v8M13 6h3" /></svg>
      </button>
      {dockApps.map((a) => (
        <button key={a.name} aria-label={a.name} className="flex h-10 w-[49px] flex-col items-center">
          <span className="flex flex-1 items-center">{a.icon}</span>
          <span className="h-[2px] w-10 bg-[#76b9ed]" />
        </button>
      ))}
      <button aria-label="Kickidler" className="flex h-10 w-12 flex-col items-center bg-[#4b4a4a]">
        <span className="flex flex-1 items-center"><KIcon className="h-6 w-6" /></span>
        <span className="h-[2px] w-full bg-[#76b9ed]" />
      </button>
      <div className="ml-auto flex h-full items-center text-[12px]">
        <ChevronUp size={18} strokeWidth={2} />
        <Volume2 size={17} strokeWidth={1.5} className="ml-[8px]" />
        <svg className="ml-[7px] h-[14px] w-[17px]" viewBox="0 0 17 14" fill="none" stroke="#fff"><path d="M5 1.500h11.500v8H3.500V5M.5.5h4v4h-4zM10 10v3M6 13.500h8" /></svg>
        <span className="ml-[10px] text-[11px]">ENG</span>
        <div className="ml-[10px] w-[60px] text-center text-[11px] leading-[18px]">
          <p>15:20</p>
          <p>04.08.2022</p>
        </div>
        <svg className="ml-[15px] h-[26px] w-[26px]" viewBox="0 0 26 26">
          <path d="M1 2h16v13H9l-3 3v-3H1z" fill="#fff" />
          <path d="M4 6h10M4 9h10M4 12h7" stroke="#222" />
          <circle cx="17" cy="17" r="7.500" fill="#333" stroke="#999" />
          <text x="14" y="21" fontSize="11" fill="#fff">1</text>
        </svg>
        <span className="ml-[10px] mr-1 h-full w-px bg-[#5a5a5a]" />
      </div>
    </footer>
  );
}

export default function App() {
  return (
    <div className={`flex min-h-screen flex-col bg-[#484850] text-[#ececec] ${uiFont}`}>
      <TitleBar />
      <Header />
      <TabStrip />
      <main className="flex-1 pb-5 pt-[7px]">
        <h1 className="mx-[7px] h-6 border-b border-t border-b-[#4e4e56] border-t-[#34343b] bg-[#3f3f47] pl-[118px] text-center text-[12px] leading-[24px] text-[#f0f0f0]">
          Кирилл Мартынов &nbsp;&nbsp;( 22/8/4 12:34:04 )
        </h1>
        <div className="grid grid-cols-[471fr_978fr_471fr]">
          <div />
          <RemoteScreen />
          <SidePanel />
        </div>
      </main>
      <p className="h-[30px] whitespace-nowrap border-b border-t border-b-[#4e4e56] border-t-[#34343b] bg-[#3f3f47] text-center text-[12px] leading-[30px] text-[#818187]">
        <span className="font-bold text-[#e4e4e4]">гт←←</span>
        unmanlyРАминд←жини⏎1с-северо-запад⏎Здравствуйте, Василий!&lt;⏎&gt;⏎Акты Вам вчера отправили в Диадоке, они ожидают подпри←←иси с Вашей ст
      </p>
      <PlayerControls />
      <Timeline />
      <Taskbar />
    </div>
  );
}
